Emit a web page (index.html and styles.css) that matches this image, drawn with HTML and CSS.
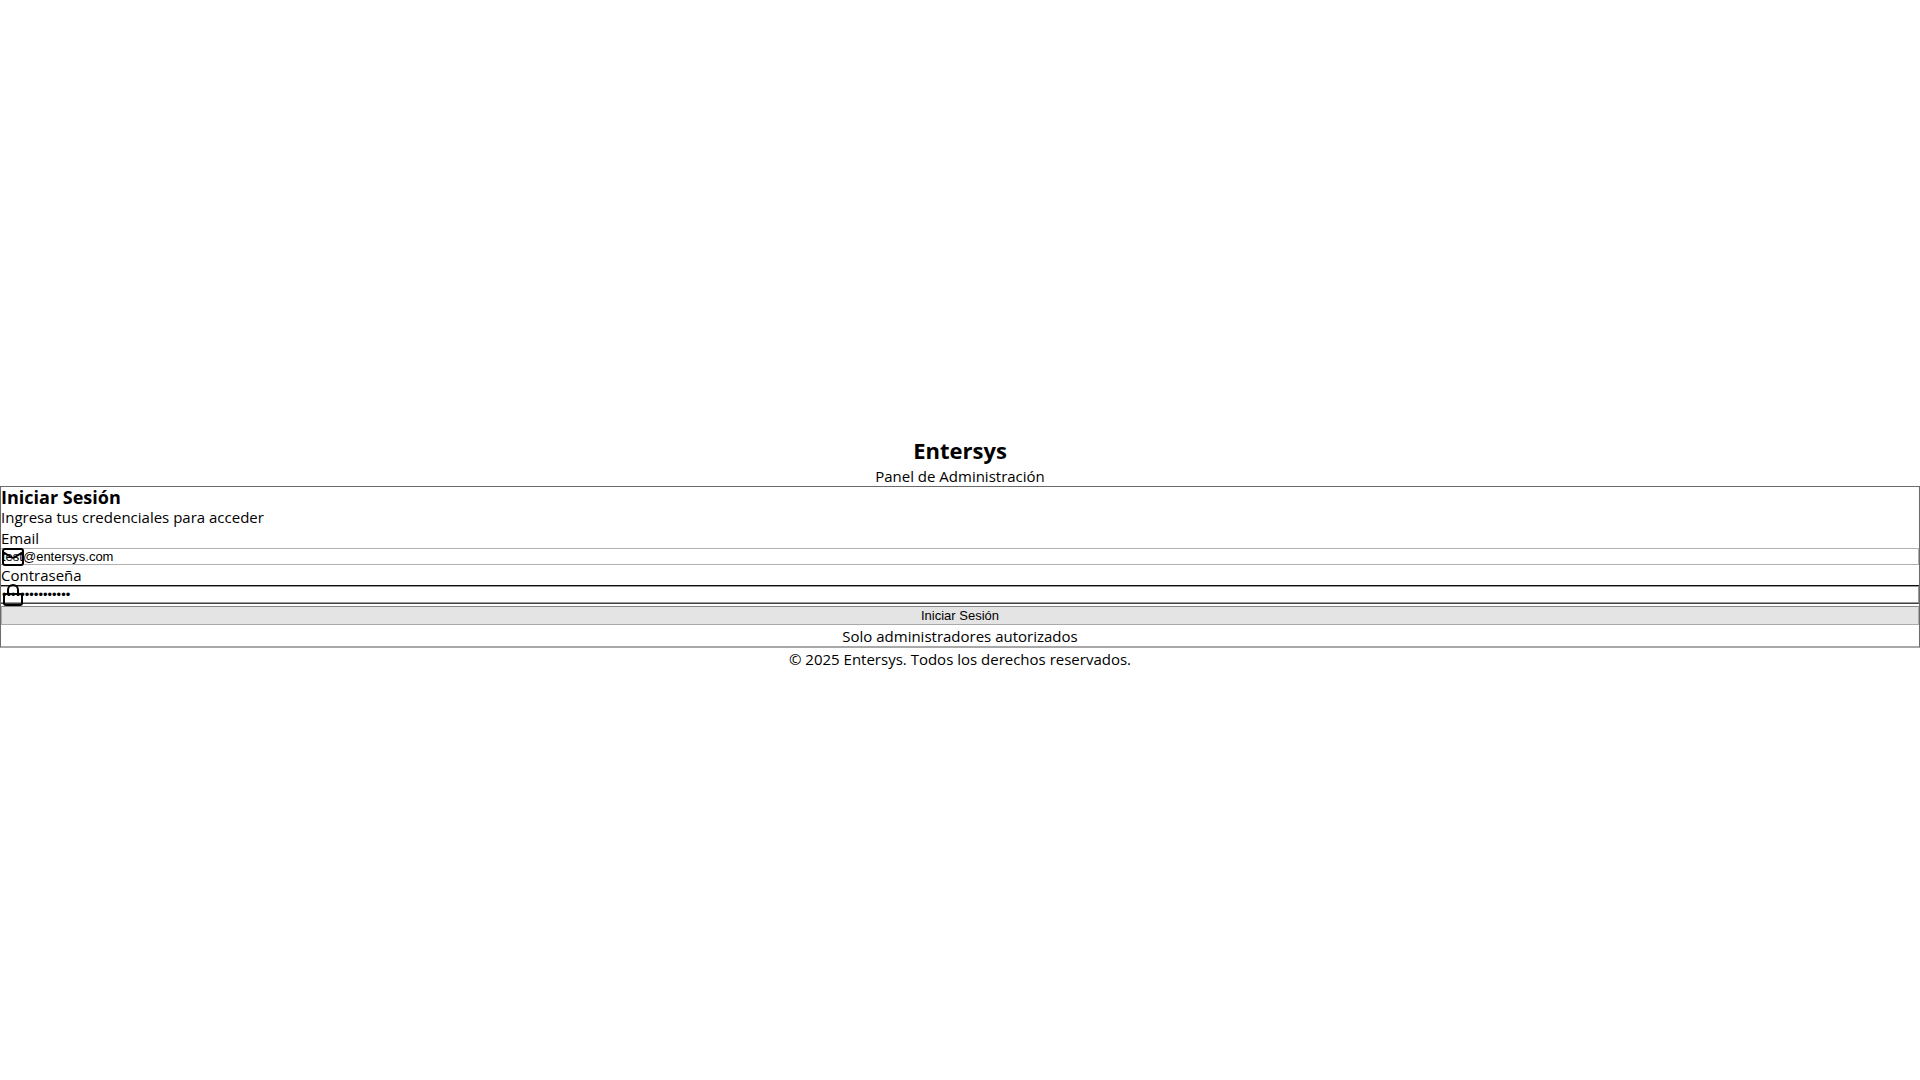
FILE: index.html
```html
<!DOCTYPE html>
<html lang="es">
<head>
<meta charset="utf-8">
<title>Entersys</title>
<link rel="stylesheet" href="styles.css">
</head>
<body>
<main class="page">
  <header class="brand">
    <h1 class="brand-name">Entersys</h1>
    <p class="text">Panel de Administración</p>
  </header>
  <section class="card">
    <h2 class="card-title">Iniciar Sesión</h2>
    <p class="text">Ingresa tus credenciales para acceder</p>
    <form class="form">
      <label class="label" for="email">Email</label>
      <div class="field">
        <input class="input" id="email" type="email" value="test@entersys.com">
        <svg class="icon" viewBox="0 0 24 24" aria-hidden="true"><rect x="2" y="4" width="20" height="16" rx="2"/><path d="m22 7-8.97 5.7a1.94 1.94 0 0 1-2.06 0L2 7"/></svg>
      </div>
      <label class="label" for="password">Contraseña</label>
      <div class="field">
        <input class="input input-active" id="password" type="password" value="contrasena12345">
        <svg class="icon" viewBox="0 0 24 24" aria-hidden="true"><rect x="3" y="11" width="18" height="11" rx="2"/><path d="M7 11V7a5 5 0 0 1 10 0v4"/></svg>
      </div>
      <button class="submit" type="button">Iniciar Sesión</button>
    </form>
    <p class="note">Solo administradores autorizados</p>
  </section>
  <footer class="footer">© 2025 Entersys. Todos los derechos reservados.</footer>
</main>
</body>
</html>
```
FILE: styles.css
```css
* { box-sizing: border-box; margin: 0; padding: 0; }
body {
  font-family: "Segoe UI", "Open Sans", "Noto Sans", sans-serif;
  font-size: 15px;
  line-height: 20px;
  color: #000;
  background: #fff;
}
.page {
  min-height: 100vh;
  display: flex;
  flex-direction: column;
  justify-content: center;
  padding-top: 26px;
}
.brand { text-align: center; }
.brand-name { font-size: 22px; line-height: 28px; padding-bottom: 2px; }
.card {
  border: 1px solid #6b6b6b;
  border-bottom: 2px solid #a8a8a8;
}
.card-title { font-size: 18px; line-height: 20px; }
.form { display: flex; flex-direction: column; padding-top: 1px; }
.field { position: relative; display: flex; }
.input {
  flex: 1;
  min-width: 0;
  height: 17px;
  padding: 0 1px;
  border: 1px solid #b0b0b0;
  border-left-width: 0;
  background: #fff;
  color: #000;
  font-family: "Liberation Sans", Arial, sans-serif;
  font-size: 13px;
}
.input-active {
  margin: 1px 0;
  border-color: #999;
  box-shadow: 0 -1px #101010, 0 1px #444;
}
.icon {
  position: absolute;
  left: 0;
  top: 50%;
  width: 24px;
  height: 24px;
  margin-top: -12px;
  fill: none;
  stroke: #000;
  stroke-width: 2;
  stroke-linecap: round;
  stroke-linejoin: round;
}
.submit {
  height: 19px;
  margin-top: 2px;
  border: 1px solid #aaa;
  border-top-color: #888;
  background: #e4e4e4;
  color: #000;
  font-family: "Liberation Sans", Arial, sans-serif;
  font-size: 13px;
  line-height: 17px;
}
.note, .footer { text-align: center; }
.note { padding-top: 1px; }
.footer { line-height: 22px; }
```
